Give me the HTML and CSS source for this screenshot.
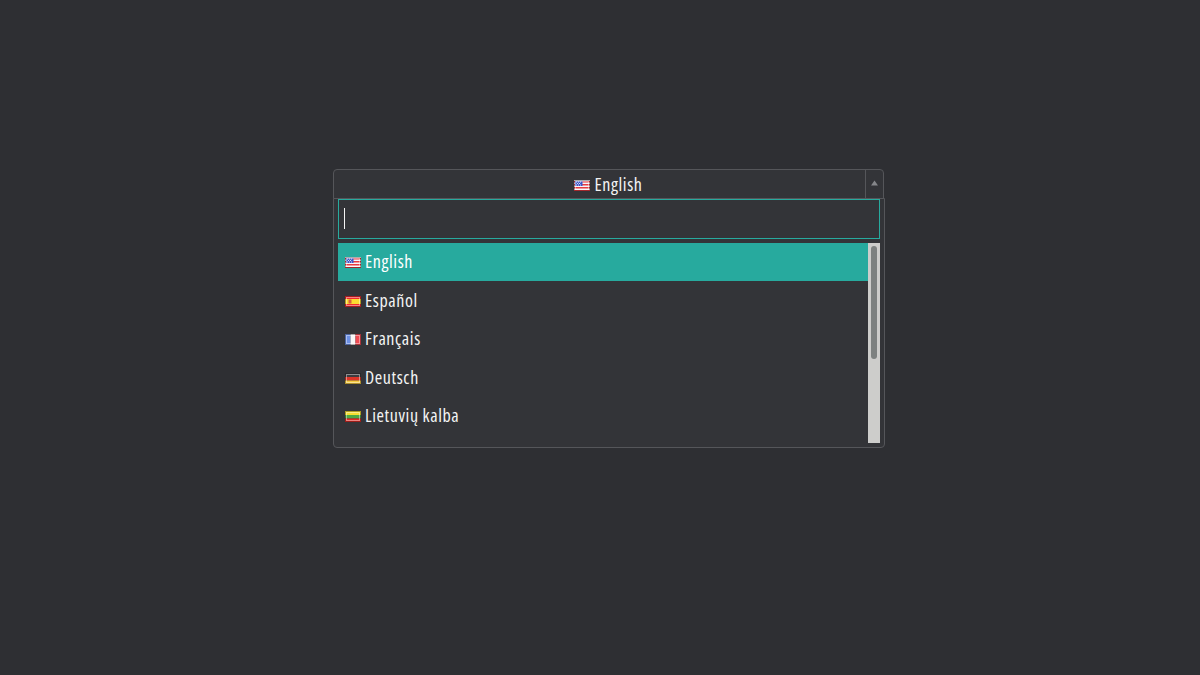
FILE: index.html
```html
<!DOCTYPE html>
<html lang="en">
<head>
<meta charset="utf-8">
<title>Language select</title>
<link rel="stylesheet" href="styles.css">
</head>
<body>
<div class="select">
  <div class="toggle">
    <div class="current">
      <svg class="flag" viewBox="0 0 16 11"><rect width="16" height="11" fill="#f6f6fa"/><path d="M0 1h16v1.500H0zM0 4h16v1.500H0zM0 7h16v1.500H0zM0 10h16v1H0z" fill="#e83a40"/><rect x="1" y="1" width="7.500" height="5" fill="#3f55c8"/><path d="M2 2h1M4 2h1M6 2h1M3 3.500h1M5 3.500h1M2 5h1M4 5h1M6 5h1" stroke="#fff" stroke-width=".8"/><rect class="shine" x="1.500" y="1.500" width="13" height="8"/><rect class="edge" x=".5" y=".5" width="15" height="10"/></svg>
      <span class="label">English</span>
    </div>
    <div class="arrow"><svg width="7" height="6" viewBox="0 0 7 6"><path d="M3.500 .5 7 5.500H0z" fill="#85868a"/></svg></div>
  </div>
  <div class="dropdown">
    <div class="search"><i class="caret"></i></div>
    <div class="list">
      <ul class="options">
        <li class="option active"><svg class="flag" viewBox="0 0 16 11"><rect width="16" height="11" fill="#f6f6fa"/><path d="M0 1h16v1.500H0zM0 4h16v1.500H0zM0 7h16v1.500H0zM0 10h16v1H0z" fill="#e83a40"/><rect x="1" y="1" width="7.500" height="5" fill="#3f55c8"/><path d="M2 2h1M4 2h1M6 2h1M3 3.500h1M5 3.500h1M2 5h1M4 5h1M6 5h1" stroke="#fff" stroke-width=".8"/><rect class="shine" x="1.500" y="1.500" width="13" height="8"/><rect class="edge" x=".5" y=".5" width="15" height="10"/></svg><span>English</span></li>
        <li class="option"><svg class="flag" viewBox="0 0 16 11"><rect width="16" height="11" fill="#ee2a2e"/><rect y="3" width="16" height="5" fill="#fbdc30"/><rect x="3.500" y="3.500" width="3" height="4" fill="#d8603c"/><rect class="shine" x="1.500" y="1.500" width="13" height="8"/><rect class="edge" x=".5" y=".5" width="15" height="10"/></svg><span>Español</span></li>
        <li class="option"><svg class="flag" viewBox="0 0 16 11"><rect width="5.500" height="11" fill="#6d90e4"/><rect x="5.500" width="5" height="11" fill="#f8f6f6"/><rect x="10.500" width="5.500" height="11" fill="#f04a52"/><rect class="shine" x="1.500" y="1.500" width="13" height="8"/><rect class="edge" x=".5" y=".5" width="15" height="10"/></svg><span>Français</span></li>
        <li class="option"><svg class="flag" viewBox="0 0 16 11"><rect width="16" height="4" fill="#3c3c40"/><rect y="4" width="16" height="3.500" fill="#dc3428"/><rect y="7.500" width="16" height="3.500" fill="#f6cc40"/><rect class="shine" x="1.500" y="1.500" width="13" height="8"/><rect class="edge" x=".5" y=".5" width="15" height="10"/></svg><span>Deutsch</span></li>
        <li class="option"><svg class="flag" viewBox="0 0 16 11"><rect width="16" height="4" fill="#f6de30"/><rect y="4" width="16" height="3.500" fill="#4ea844"/><rect y="7.500" width="16" height="3.500" fill="#e02a24"/><rect class="shine" x="1.500" y="1.500" width="13" height="8"/><rect class="edge" x=".5" y=".5" width="15" height="10"/></svg><span>Lietuvių kalba</span></li>
      </ul>
      <div class="scrollbar"><div class="thumb"></div></div>
    </div>
  </div>
</div>
</body>
</html>
```
FILE: styles.css
```css
* { box-sizing: border-box; }
html, body { margin: 0; height: 100%; }
body {
  background: #2e2f33;
  padding: 169px 0 0 333px;
  font-family: "Open Sans", "Liberation Sans", sans-serif;
  font-stretch: 75%;
  font-weight: 400;
  letter-spacing: .6px;
  font-size: 18px;
  color: #f4f4f4;
  overflow: hidden;
}
.select { width: 552px; }
.toggle {
  width: 551px;
  height: 30px;
  display: flex;
  background: #333438;
  border: 1px solid #55565a;
  border-radius: 4px 4px 0 0;
}
.current {
  flex: 1;
  display: flex;
  align-items: center;
  justify-content: center;
  gap: 4px;
  padding-left: 18px;
}
.current .flag { margin-top: 2px; }
.arrow {
  width: 18px;
  border-left: 1px solid #55565a;
  display: flex;
  justify-content: center;
  padding-top: 10px;
}
.arrow svg { display: block; }
.flag { width: 16px; height: 11px; flex: none; display: block; margin-top: 1px; }
.shine { fill: none; stroke: #fff; stroke-opacity: .42; }
.edge { fill: none; stroke: #000; stroke-opacity: .3; }
.option span { margin-top: -2px; }
.dropdown {
  height: 250px;
  margin-top: -1px;
  padding: 0 4px 4px;
  background: #333438;
  border: 1px solid #55565a;
  border-radius: 0 0 4px 4px;
}
.search {
  height: 40px;
  border: 1px solid #27aa9e;
  display: flex;
  align-items: center;
  padding: 0 0 1px 5px;
}
.caret { display: block; width: 1px; height: 21px; background: #f4f4f4; }
.list {
  height: 200px;
  margin-top: 4px;
  display: flex;
}
.options { flex: 1; margin: 0; padding: 0; list-style: none; }
.option {
  height: 38px;
  margin-bottom: .5px;
  display: flex;
  align-items: center;
  gap: 4px;
  padding-left: 7px;
}
.active { background: #27aa9e; color: #fff; }
.scrollbar {
  width: 12px;
  background: #cdcdcb;
  padding: 3px 3px 0;
}
.thumb { height: 113px; border-radius: 3px; background: #7d8180; }
```
